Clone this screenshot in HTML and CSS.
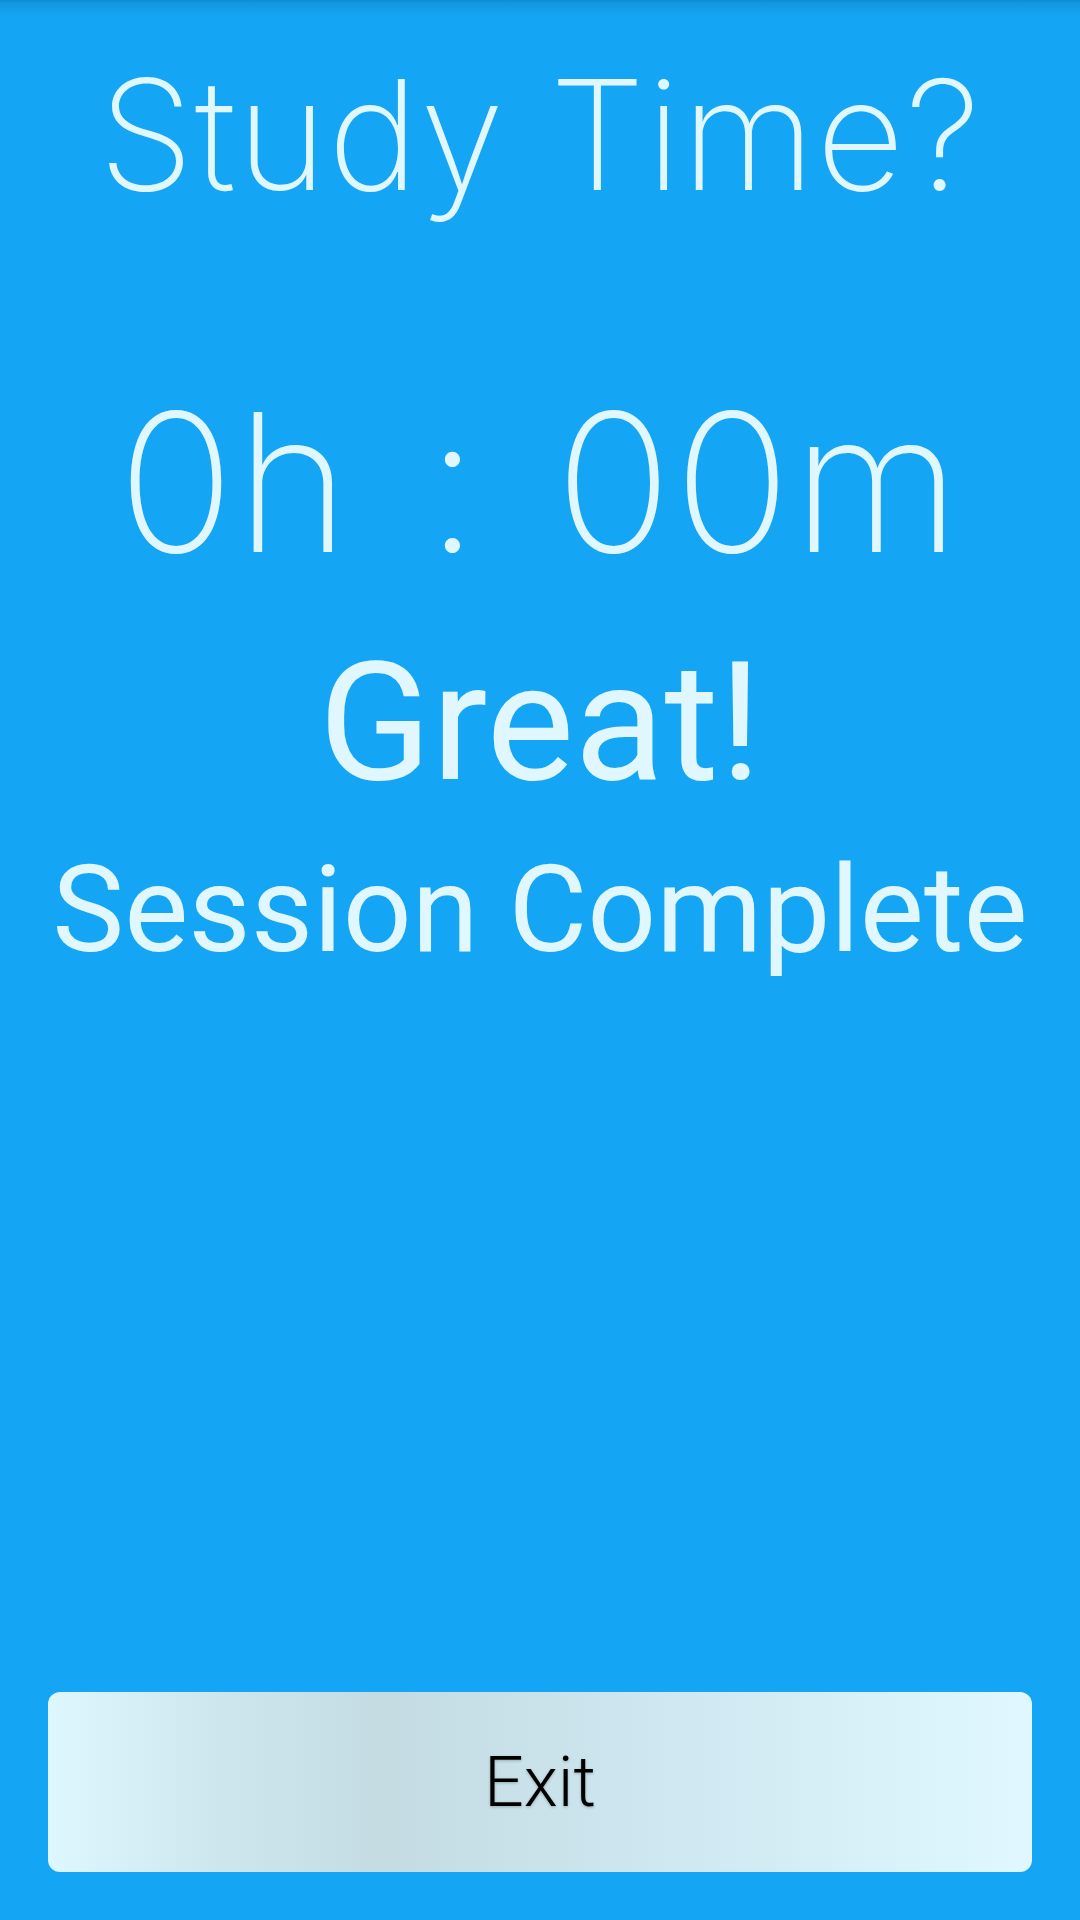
FILE: index.html
```html
<!DOCTYPE html>
<html>
<head>
<meta charset="utf-8">
<link rel="stylesheet" href="styles.css">
</head>
<body>
<div class="screen">
  <h1 class="title">Study Time?</h1>
  <div class="timer">0h : 00m</div>
  <div class="great">Great!</div>
  <div class="session">Session Complete</div>
  <button class="exit">Exit</button>
</div>
</body>
</html>
```
FILE: styles.css
```css
html, body {
  margin: 0;
  padding: 0;
}
.screen {
  width: 1080px;
  height: 1920px;
  display: flex;
  flex-direction: column;
  align-items: center;
  background: linear-gradient(to bottom, #0f8bd0 0px, #1398e2 4px, #14a5f4 16px, #14a5f4 100%);
  color: #e0f7ff;
  font-family: Roboto, "Liberation Sans", sans-serif;
  box-sizing: border-box;
}
.title {
  margin: 58px 0 0;
  font-family: Inter, Roboto, sans-serif;
  font-size: 153px;
  line-height: 1;
  font-weight: 200;
  letter-spacing: 1.2px;
  white-space: nowrap;
}
.timer {
  margin-top: 175px;
  font-family: Inter, Roboto, sans-serif;
  font-size: 193px;
  line-height: 1;
  font-weight: 240;
  letter-spacing: 2px;
  white-space: pre;
  word-spacing: 18px;
}
.great {
  margin-top: 61px;
  font-size: 166px;
  line-height: 1;
  font-weight: 400;
}
.session {
  margin-top: 44px;
  font-size: 121px;
  line-height: 1;
  font-weight: 400;
  white-space: nowrap;
}
.exit {
  margin: auto 48px 48px;
  align-self: stretch;
  height: 180px;
  border: none;
  border-radius: 12px;
  background: linear-gradient(to right, #def6fe 0%, #cde6ee 18%, #c4dbe2 34%, #cde6ef 60%, #d9f1f9 85%, #e0f7ff 100%);
  font-family: Roboto, "Liberation Sans", sans-serif;
  font-size: 70px;
  font-weight: 300;
  color: #000;
  text-shadow: 0 1px 3px rgba(0,0,0,0.25);
  padding: 0;
}
```
